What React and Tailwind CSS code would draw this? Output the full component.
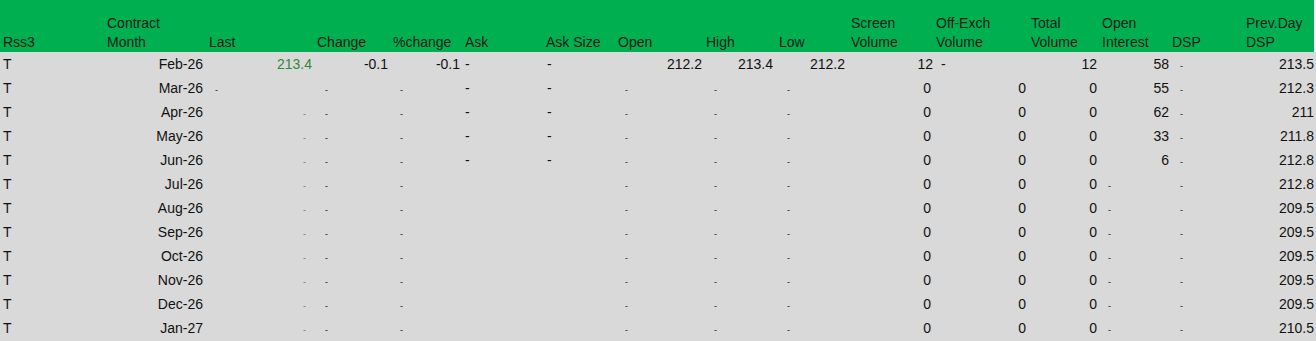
import React from 'react';

// Excel-style futures quote sheet
const GRID = 'grid grid-cols-[104px_102px_108px_76px_72px_81px_72px_88px_73px_72px_85px_95px_71px_70px_74px_73px]';

const HEADERS = [
  ['Rss3'],
  ['Contract', 'Month'],
  ['Last'],
  ['Change'],
  ['%change'],
  ['Ask'],
  ['Ask Size'],
  ['Open'],
  ['High'],
  ['Low'],
  ['Screen', 'Volume'],
  ['Off-Exch', 'Volume'],
  ['Total', 'Volume'],
  ['Open', 'Interest'],
  ['DSP'],
  ['Prev.Day', 'DSP'],
];

// cell helpers: value, alignment + padding, style kind
const num = (v, pad) => ({ v, c: `justify-end ${pad}` });
const left = (v, pad) => ({ v, c: `justify-start ${pad}` });
const dot = (pad, green) => ({ v: '-', c: `justify-start ${pad}`, small: true, green });
const dotR = (pad, green) => ({ v: '-', c: `justify-end ${pad}`, small: true, green });
const none = { v: '', c: '' };

const MONTHS = ['Feb-26', 'Mar-26', 'Apr-26', 'May-26', 'Jun-26', 'Jul-26', 'Aug-26', 'Sep-26', 'Oct-26', 'Nov-26', 'Dec-26', 'Jan-27'];
const OI = [58, 55, 62, 33, 6];
const PREV = ['213.5', '212.3', '211', '211.8', '212.8', '212.8', '209.5', '209.5', '209.5', '209.5', '209.5', '210.5'];

const buildRow = (i) => {
  const cells = [left('T', 'pl-[3px]'), num(MONTHS[i], 'pr-[3px]')];

  if (i === 0) {
    cells.push(
      { v: '213.4', c: 'justify-end pr-[2px]', green: true },
      num('-0.1', 'pr-[2px]'),
      num('-0.1', 'pr-[2px]'),
      left('-', 'pl-[3px]'),
      left('-', 'pl-[4px]'),
      num('212.2', 'pr-[1px]'),
      num('213.4', 'pr-[3px]'),
      num('212.2', 'pr-[3px]'),
      num('12', 'pr-0'),
      left('-', 'pl-[8px]'),
      num('12', 'pr-[2px]'),
      num(OI[i], 'pr-0'),
      dot('pl-[11px]'),
      num(PREV[i], 'pr-[2px]')
    );
    return cells;
  }

  cells.push(
    i === 1 ? dot('pl-[9px]') : dotR('pr-[8px]', true),
    dot('pl-[11px]'),
    dot('pl-[10px]'),
    i < 5 ? left('-', 'pl-[3px]') : none,
    i < 5 ? left('-', 'pl-[4px]') : none,
    dot('pl-[10px]'),
    dot('pl-[11px]'),
    dot('pl-[11px]'),
    num('0', 'pr-[2px]'),
    num('0', 'pr-[2px]'),
    num('0', 'pr-[2px]'),
    i < 5 ? num(OI[i], 'pr-0') : dot('pl-[9px]'),
    dot('pl-[11px]'),
    num(PREV[i], 'pr-[2px]')
  );
  return cells;
};

const ROWS = MONTHS.map((_, i) => buildRow(i));

export default function App() {
  return (
    <div className="w-[1316px] h-[341px] bg-[#d9d9d9] text-[14px] text-[#111] font-['Liberation_Sans',Arial,sans-serif] overflow-hidden">
      <div className="flex">
        <div className={`${GRID} h-[52px] w-[1314px] bg-[#00b050] text-[#1a1a1a]`}>
          {HEADERS.map((lines, i) => (
            <div key={i} className="flex flex-col justify-end pl-[3px] leading-[19px] whitespace-nowrap">
              {lines.map((l) => (
                <span key={l}>{l}</span>
              ))}
            </div>
          ))}
        </div>
        <div className="w-[2px] h-[52px] bg-white" />
      </div>

      {ROWS.map((cells, r) => (
        <div key={r} className={`${GRID} h-6`}>
          {cells.map((cell, c) => (
            <div key={c} className={`flex items-center pt-px whitespace-nowrap ${cell.c}`}>
              {cell.small ? (
                <span className={`text-[9px] leading-none mt-[3px] ${cell.green ? 'text-[#4d8a5a]' : 'text-[#222]'}`}>-</span>
              ) : (
                <span className={cell.green ? 'text-[#2e8b2e]' : ''}>{cell.v}</span>
              )}
            </div>
          ))}
        </div>
      ))}
    </div>
  );
}
